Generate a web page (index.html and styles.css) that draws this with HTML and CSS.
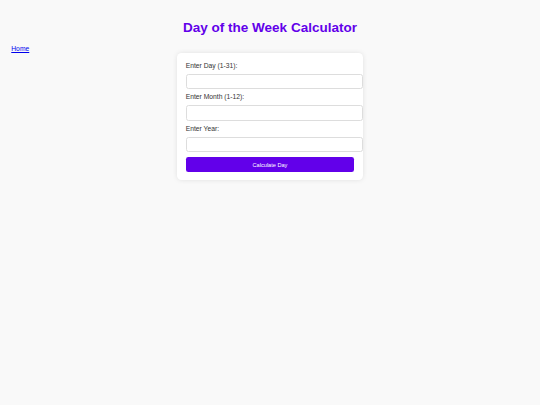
FILE: index.html
```html
<!DOCTYPE html>
<html lang="en">
<head>
<meta charset="utf-8">
<title>Day of the Week Calculator</title>
<link rel="stylesheet" href="styles.css">
</head>
<body>
  <h1 class="title">Day of the Week Calculator</h1>
  <nav class="nav"><a href="#" class="home-link">Home</a></nav>
  <form class="card">
    <label class="field-label" for="day">Enter Day (1-31):</label>
    <input class="field-input" id="day" type="number">
    <label class="field-label" for="month">Enter Month (1-12):</label>
    <input class="field-input" id="month" type="number">
    <label class="field-label" for="year">Enter Year:</label>
    <input class="field-input" id="year" type="number">
    <button class="calc-btn" type="button">Calculate Day</button>
  </form>
</body>
</html>
```

FILE: styles.css
```css
html, body {
  margin: 0;
  background: #f9f9f9;
}
body {
  padding: 11.25px;
  font-family: "Liberation Sans", Arial, sans-serif;
  color: #333;
}
.title {
  margin: 8.75px 0 9.3px;
  font-size: 13.5px;
  line-height: 15.5px;
  font-weight: bold;
  text-align: center;
  color: #6200ea;
}
.nav {
  font-size: 6.75px;
  line-height: 7.8px;
}
.home-link {
  color: #0000ee;
  text-decoration: underline;
}
.card {
  box-sizing: border-box;
  width: 186.75px;
  margin: 0 auto;
  padding: 9px 9px 8px;
  background: #fff;
  border-radius: 4.5px;
  box-shadow: 0 0 5px rgba(0, 0, 0, 0.1);
}
.field-label {
  display: block;
  font-size: 6.75px;
  line-height: 8px;
  margin-bottom: 4px;
  color: #333;
}
.field-input {
  display: block;
  box-sizing: content-box;
  width: 100%;
  height: 13.3px;
  margin: 0 0 4.5px;
  padding: 0 3.3px;
  border: 1px solid #ddd;
  border-radius: 2.5px;
  background: #fff;
  font-family: inherit;
  font-size: 7px;
}
.calc-btn {
  display: block;
  width: 100%;
  height: 15.5px;
  padding: 0;
  border: none;
  border-radius: 2.3px;
  background: #6200ea;
  color: #fff;
  font-family: inherit;
  font-size: 5.6px;
}
```
